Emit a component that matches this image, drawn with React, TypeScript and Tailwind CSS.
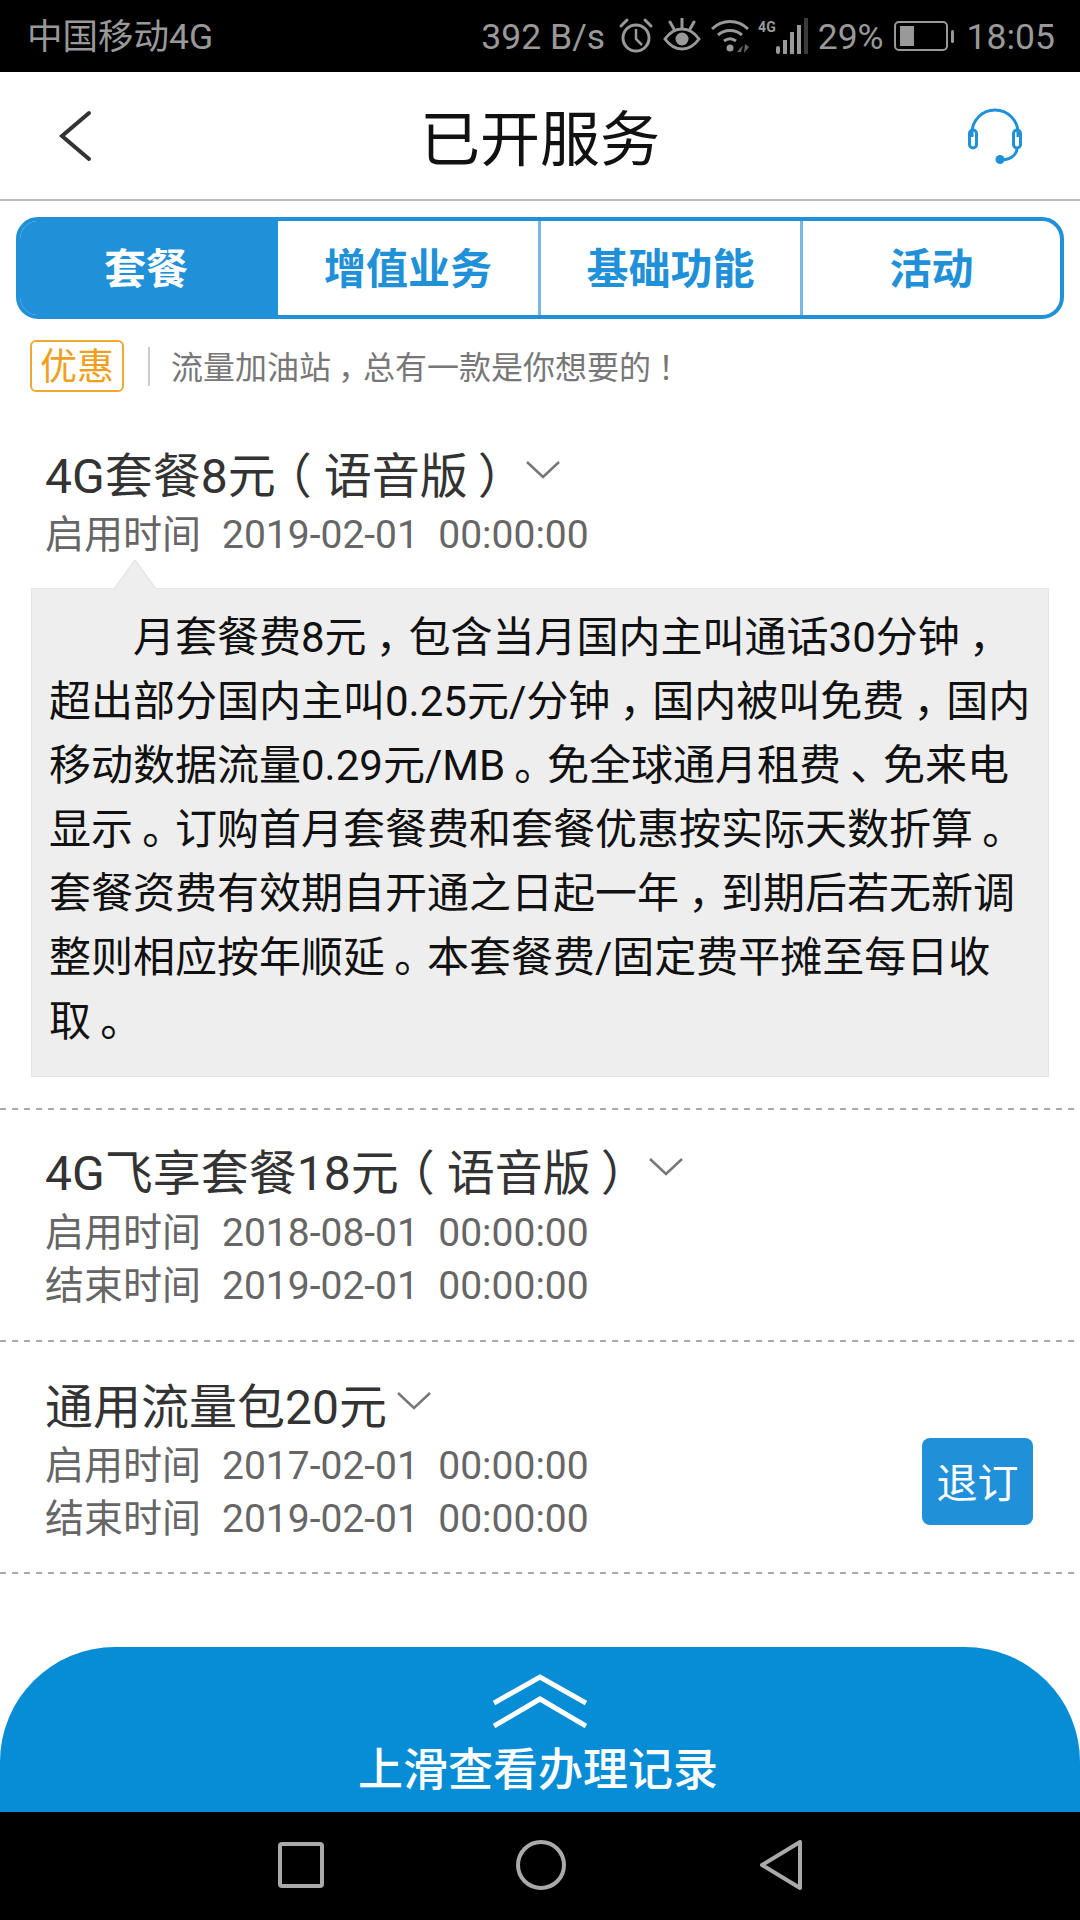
import React from "react";

const BLUE = "#2090d8";

function Alarm() {
  return (
    <svg width="36" height="38" viewBox="0 0 36 38" fill="none" stroke="#999" strokeWidth="3">
      <circle cx="18" cy="21" r="13" />
      <path d="M18 12v10l6 6" strokeWidth="2.5" />
      <path d="M3 9l6-6M33 9l-6-6" strokeLinecap="round" />
    </svg>
  );
}
function Eye() {
  return (
    <svg width="38" height="36" viewBox="0 0 38 36" fill="none" stroke="#999" strokeWidth="3">
      <path d="M2 21c5-7 10-10 17-10s12 3 17 10c-5 7-10 10-17 10S7 28 2 21z" />
      <circle cx="19" cy="21" r="6.5" fill="#999" stroke="none" />
      <path d="M7 4l4 7M19 1v9M31 4l-4 7" strokeLinecap="round" />
    </svg>
  );
}
function Wifi() {
  return (
    <svg width="40" height="36" viewBox="0 0 40 36" fill="none" stroke="#999" strokeWidth="3">
      <path d="M1 11C11 1 27 1 37 11M7 17c7-6 17-6 24 0M13 23c4-3 8-3 12 0" />
      <circle cx="19" cy="30" r="3.5" fill="#999" stroke="none" />
      <path d="M26 34h4l2-7zM34 26l-1 9 5-6z" fill="#666" stroke="none" />
    </svg>
  );
}
function Signal() {
  return (
    <svg width="34" height="40" viewBox="0 0 34 40">
      <rect x="0" y="30" width="4" height="8" rx="2" fill="#999" />
      <rect x="7" y="24" width="4" height="14" fill="#999" />
      <rect x="14" y="16" width="4" height="22" fill="#999" />
      <rect x="21" y="9" width="4" height="29" fill="#999" />
      <rect x="28" y="2" width="4" height="36" fill="#3a3a3a" />
    </svg>
  );
}
function Battery() {
  return (
    <svg width="62" height="30" viewBox="0 0 62 30" fill="none">
      <rect x="1" y="1" width="52" height="28" rx="4" stroke="#999" strokeWidth="2" />
      <rect x="6" y="5" width="14" height="20" fill="#999" />
      <rect x="57" y="9" width="3" height="13" rx="1.5" fill="#999" />
    </svg>
  );
}
function Headset() {
  return (
    <svg width="54" height="58" viewBox="0 0 54 58" fill="none" stroke={BLUE} strokeWidth="3">
      <path d="M4 30V26a23 23 0 0 1 46 0v4" />
      <rect x="1.5" y="23" width="7" height="18" rx="3.5" />
      <rect x="45.5" y="23" width="7" height="18" rx="3.5" />
      <path d="M49 41c0 8-8 12-17 12" />
      <circle cx="32" cy="52.5" r="4.5" fill={BLUE} stroke="none" />
    </svg>
  );
}
function Chevron() {
  return (
    <svg width="34" height="18" viewBox="0 0 34 18" fill="none" stroke="#777" strokeWidth="2.5" className="shrink-0">
      <path d="M1 1l16 15L33 1" />
    </svg>
  );
}

function Dashed() {
  return <div className="h-[2px] w-full bg-[repeating-linear-gradient(90deg,#aaa_0_6px,transparent_6px_12px)]" />;
}

// Full-width punctuation sits near the middle of its box on the device's font
function Punct({ text }: { text: string }) {
  const parts = text.split(/([，。、！]+)/);
  return (
    <>
      {parts.map((p, i) =>
        /^[，。、！]+$/.test(p) ? (
          <span key={i} className="pl-[0.22em] tracking-[-0.22em]">
            {p}
          </span>
        ) : (
          <React.Fragment key={i}>{p}</React.Fragment>
        ),
      )}
    </>
  );
}

function Title({ name, note }: { name: string; note?: string }) {
  return (
    <div className="flex h-[58px] items-center gap-[10px] text-[48px] leading-[58px] text-[#333]">
      <span className="-ml-[1px] whitespace-pre">
        {name}
        {note && (
          <>
            <span className="relative -left-[12px]">（</span>
            {note}
            <span className="pl-[10px] tracking-[-10px]">）</span>
          </>
        )}
      </span>
      <span className="-mt-[14px]">
        <Chevron />
      </span>
    </div>
  );
}

function DateRow({ label, value }: { label: string; value: string }) {
  return (
    <div className="flex h-[53px] items-center gap-[21px] text-[#666]">
      <span className="-ml-[1px] text-[39px] leading-[53px]">{label}</span>
      <span className="whitespace-pre text-[39px] leading-[53px]">{value}</span>
    </div>
  );
}

const tabs = ["套餐", "增值业务", "基础功能", "活动"];

const lines = [
  "　　月套餐费8元，包含当月国内主叫通话30分钟，",
  "超出部分国内主叫0.25元/分钟，国内被叫免费，国内",
  "移动数据流量0.29元/MB。免全球通月租费、免来电",
  "显示。订购首月套餐费和套餐优惠按实际天数折算。",
  "套餐资费有效期自开通之日起一年，到期后若无新调",
  "整则相应按年顺延。本套餐费/固定费平摊至每日收",
  "取。",
];

export default function App() {
  return (
    <div className="flex h-[1920px] w-[1080px] flex-col overflow-hidden bg-white [font-family:Roboto,'Noto_Sans_CJK_SC',sans-serif]">
      <div className="flex h-[72px] shrink-0 items-center bg-black pl-[27px] pr-[25px] text-[35.5px] text-[#999]">
        <span className="mt-[3px]">中国移动4G</span>
        <div className="ml-auto flex items-center">
          <span className="mt-[3px]">392 B/s</span>
          <span className="ml-[13px] flex"><Alarm /></span>
          <span className="ml-[9px] flex"><Eye /></span>
          <span className="ml-[10px] flex"><Wifi /></span>
          <span className="ml-[7px] -mt-[18px] text-[14px] font-bold leading-none">4G</span>
          <span className="flex"><Signal /></span>
          <span className="ml-[8px] mt-[3px]">29%</span>
          <span className="ml-[10px] flex"><Battery /></span>
          <span className="ml-[11px] mt-[3px]">18:05</span>
        </div>
      </div>

      <div className="flex h-[129px] shrink-0 items-center justify-between border-b-2 border-[#bbb] pl-[58px] pr-[58px]">
        <svg width="34" height="52" viewBox="0 0 34 52" fill="none" stroke="#333" strokeWidth="4" strokeLinecap="round">
          <path d="M31 3L4 26l27 23" />
        </svg>
        <span className="ml-[20px] mt-[10px] text-[60px] leading-none text-[#111]">已开服务</span>
        <Headset />
      </div>

      <div className="mx-[16px] mt-[16px] grid h-[102px] w-[1048px] shrink-0 grid-cols-[258px_263px_262px_1fr] overflow-hidden rounded-[22px] border-[4px] border-[#2090d8] text-[42px] font-bold leading-none">
        {tabs.map((t, i) => (
          <div
            key={t}
            className={
              i === 0
                ? "flex items-center justify-center bg-[#2090d8] pr-[6px] pt-[4px] text-white"
                : i === 3
                  ? "flex items-center justify-center pt-[4px] text-[#2090d8]"
                  : "flex items-center justify-center border-r-[3px] border-[#7ab8e4] pt-[4px] text-[#2090d8]"
            }
          >
            {t}
          </div>
        ))}
      </div>

      <div className="mt-[21px] flex h-[52px] shrink-0 items-center pl-[30px]">
        <span className="flex h-[52px] w-[94px] items-center justify-center rounded-[6px] border-2 border-[#f0a830] pt-[3px] text-[37px] leading-none text-[#f0a020]">
          优惠
        </span>
        <span className="ml-[24px] h-[39px] w-[2px] bg-[#ccc]" />
        <span className="ml-[21px] mt-[4px] text-[32px] leading-none text-[#777]">
          <Punct text="流量加油站，总有一款是你想要的！" />
        </span>
      </div>

      <div className="relative shrink-0 px-[46px] pt-[56px]">
        <Title name="4G套餐8元" note="语音版" />
        <div className="mt-[3px]">
          <DateRow label="启用时间" value="2019-02-01  00:00:00" />
        </div>
      </div>

      <div className="relative mx-[31px] mt-[26px] h-[489px] w-[1018px] shrink-0 border border-[#e6e6e6] bg-[#eeeeee] pl-[17px] pt-[17px] text-[42px] leading-[64px] text-[#111]">
        <svg className="absolute -top-[29px] left-[82px]" width="42" height="29" viewBox="0 0 42 29">
          <path d="M0 29L21 0l21 29z" fill="#eeeeee" />
          <path d="M0 29L21 0l21 29" fill="none" stroke="#e6e6e6" strokeWidth="1.5" />
        </svg>
        {lines.map((l) => (
          <div key={l} className="h-[64px] whitespace-pre">
            <Punct text={l} />
          </div>
        ))}
      </div>

      <div className="mt-[31px] shrink-0"><Dashed /></div>

      <div className="shrink-0 px-[46px] pb-[27px] pt-[35px]">
        <Title name="4G飞享套餐18元" note="语音版" />
        <div className="mt-[4px]">
          <DateRow label="启用时间" value="2018-08-01  00:00:00" />
          <DateRow label="结束时间" value="2019-02-01  00:00:00" />
        </div>
      </div>
      <div className="shrink-0"><Dashed /></div>

      <div className="relative shrink-0 px-[46px] pb-[26px] pt-[37px]">
        <Title name="通用流量包20元" />
        <div className="mt-[3px]">
          <DateRow label="启用时间" value="2017-02-01  00:00:00" />
          <DateRow label="结束时间" value="2019-02-01  00:00:00" />
        </div>
        <button className="absolute right-[47px] top-[96px] flex h-[87px] w-[111px] items-center justify-center rounded-[8px] bg-[#2090d8] pt-[5px] text-[41px] leading-none text-white">
          退订
        </button>
      </div>
      <div className="shrink-0"><Dashed /></div>

      <div className="flex-1" />

      <div className="flex h-[165px] shrink-0 flex-col items-center rounded-t-[115px] bg-[#068dd6] pt-[27px]">
        <svg width="94" height="54" viewBox="0 0 94 54" fill="none" stroke="#fff" strokeWidth="5">
          <path d="M1 29L47 3l46 26M1 52l46-27 46 27" />
        </svg>
        <span className="-ml-[4px] mt-[18px] text-[45px] font-medium leading-[50px] text-white">上滑查看办理记录</span>
      </div>

      <div className="flex h-[108px] shrink-0 items-center justify-center bg-black pb-[2px]">
        <svg width="46" height="46" viewBox="0 0 46 46" fill="none" stroke="#aaa" strokeWidth="4">
          <rect x="2" y="2" width="42" height="42" rx="2" />
        </svg>
        <svg className="ml-[192px]" width="50" height="50" viewBox="0 0 50 50" fill="none" stroke="#aaa" strokeWidth="4">
          <circle cx="25" cy="25" r="23" />
        </svg>
        <svg className="ml-[193px]" width="44" height="50" viewBox="0 0 44 50" fill="none" stroke="#aaa" strokeWidth="4" strokeLinejoin="round">
          <path d="M41 2v46L3 25z" />
        </svg>
      </div>
    </div>
  );
}
